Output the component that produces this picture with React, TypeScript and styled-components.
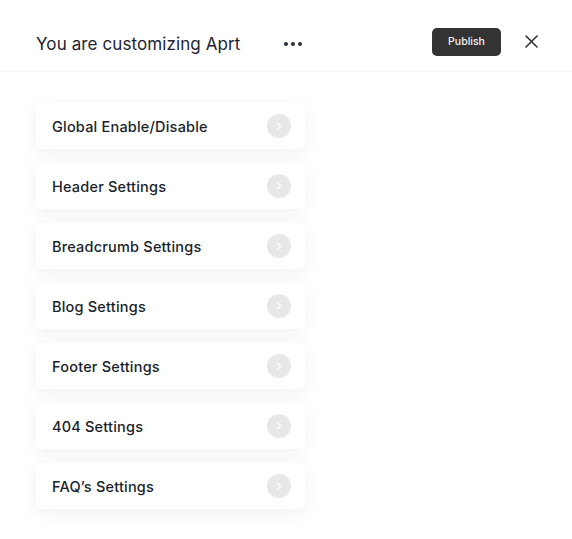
import React from 'react'
import styled, { createGlobalStyle } from 'styled-components'

const items = [
  'Global Enable/Disable',
  'Header Settings',
  'Breadcrumb Settings',
  'Blog Settings',
  'Footer Settings',
  '404 Settings',
  'FAQ’s Settings',
]

export default function App() {
  return (
    <Page>
      <GlobalStyle />
      <Header>
        <Title>You are customizing Aprt</Title>
        <Dots aria-label="more">
          <Dot />
          <Dot />
          <Dot />
        </Dots>
        <Spacer />
        <PublishButton>Publish</PublishButton>
        <CloseButton aria-label="close">
          <svg width="13" height="13" viewBox="0 0 13 13" fill="none">
            <path d="M1 1L12 12M12 1L1 12" stroke="#2b2b2b" strokeWidth="1.5" strokeLinecap="round" />
          </svg>
        </CloseButton>
      </Header>
      <List>
        {items.map((label) => (
          <Card key={label}>
            <Label>{label}</Label>
            <Arrow>
              <svg width="8" height="8" viewBox="0 0 8 8" fill="none">
                <path d="M2.6 1L5.6 4L2.6 7" stroke="#fff" strokeWidth="1.2" strokeLinecap="round" strokeLinejoin="round" />
              </svg>
            </Arrow>
          </Card>
        ))}
      </List>
    </Page>
  )
}

const GlobalStyle = createGlobalStyle`
  body {
    margin: 0;
    background: #fff;
    font-family: Inter, "Noto Sans", sans-serif;
  }
`

const Page = styled.div`
  width: 572px;
  min-height: 539px;
  background: #fff;
`

const Header = styled.div`
  display: flex;
  align-items: center;
  height: 72px;
  padding: 12px 34px 0 36px;
  box-sizing: border-box;
  border-bottom: 1px solid #f3f3f3;
`

const Title = styled.h1`
  margin: 0;
  padding-top: 4px;
  font-size: 17px;
  font-weight: 400;
  color: #1d2330;
  letter-spacing: 0.1px;
`

const Dots = styled.div`
  display: flex;
  gap: 3px;
  margin-left: 44px;
  padding-top: 4px;
`

const Dot = styled.span`
  width: 4px;
  height: 4px;
  border-radius: 50%;
  background: #2a2f3a;
`

const Spacer = styled.div`
  flex: 1;
`

const PublishButton = styled.button`
  height: 28px;
  width: 69px;
  border: none;
  border-radius: 5px;
  background: #333333;
  color: #f2f2f2;
  font-family: inherit;
  font-size: 10.5px;
  font-weight: 500;
  padding: 0;
  cursor: pointer;
`

const CloseButton = styled.button`
  display: flex;
  align-items: center;
  justify-content: center;
  margin-left: 24px;
  padding: 0;
  border: none;
  background: none;
  width: 13px;
  height: 13px;
`

const List = styled.div`
  display: flex;
  flex-direction: column;
  gap: 14px;
  padding: 31px 0 0 36px;
`

const Card = styled.div`
  display: flex;
  align-items: center;
  justify-content: space-between;
  width: 269px;
  height: 46px;
  box-sizing: border-box;
  padding: 0 14px 0 16px;
  border-radius: 5px;
  background: #fff;
  box-shadow: 0 4px 18px rgba(0, 0, 0, 0.06);
`

const Label = styled.span`
  font-size: 14.5px;
  font-weight: 500;
  color: #1a1f2b;
  letter-spacing: 0.2px;
`

const Arrow = styled.span`
  display: flex;
  align-items: center;
  justify-content: center;
  width: 24px;
  height: 24px;
  border-radius: 50%;
  background: #e8e8e8;
`
